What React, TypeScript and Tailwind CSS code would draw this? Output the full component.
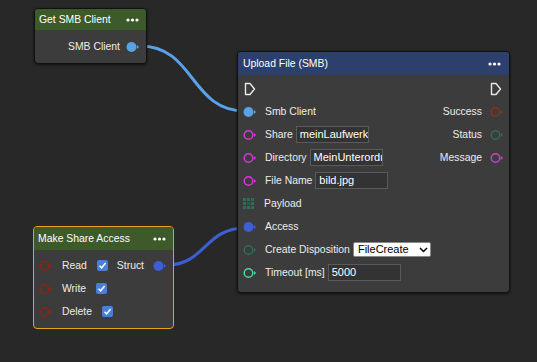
import React from 'react';

type PinKind = 'data' | 'ring' | 'exec' | 'grid';

function Pin({ kind, color }: { kind: PinKind; color: string }) {
  if (kind === 'exec') {
    return (
      <svg width="12" height="14" viewBox="0 0 12 14" className="shrink-0">
        <path d="M1.5 1.5 H6 L10.5 7 L6 12.5 H1.5 Z" fill="none" stroke={color} strokeWidth="1.4" strokeLinejoin="round" />
      </svg>
    );
  }
  if (kind === 'grid') {
    return (
      <svg width="12" height="12" viewBox="0 0 12 12" className="shrink-0">
        {[0, 4, 8].map((y) =>
          [0, 4, 8].map((x) => <rect key={`${x}-${y}`} x={x} y={y} width="3" height="3" fill={color} opacity={x === 4 && y === 4 ? 0.5 : 1} />)
        )}
      </svg>
    );
  }
  const filled = kind === 'data';
  return (
    <svg width="13" height="12" viewBox="0 0 13 12" className="shrink-0">
      <circle cx="5.5" cy="6" r={filled ? 5 : 4.3} fill={filled ? color : 'none'} stroke={color} strokeWidth={filled ? 0 : 1.5} />
      <path d="M11 4 L13 6 L11 8 Z" fill={color} />
    </svg>
  );
}

function Dots() {
  return (
    <svg width="13" height="4" viewBox="0 0 13 4">
      <circle cx="2" cy="2" r="1.6" fill="white" />
      <circle cx="6.5" cy="2" r="1.6" fill="white" />
      <circle cx="11" cy="2" r="1.6" fill="white" />
    </svg>
  );
}

function Field({ value, w }: { value: string; w: string }) {
  return (
    <div className={`${w} h-[17px] bg-[#333333] border border-[#5a5a5a] px-[3px] text-[11px] leading-[15px] text-white overflow-hidden whitespace-nowrap`}>
      {value}
    </div>
  );
}

function Check() {
  return (
    <span className="w-[11px] h-[11px] rounded-[2px] bg-[#4a7fd8] flex items-center justify-center">
      <svg width="9" height="9" viewBox="0 0 9 9">
        <path d="M1.5 4.8 L3.6 6.8 L7.6 2" fill="none" stroke="white" strokeWidth="1.5" />
      </svg>
    </span>
  );
}

export default function App() {
  const font = { fontFamily: '"Liberation Sans", Arial, sans-serif' };
  return (
    <div className="relative w-[537px] h-[362px] bg-[#282828] overflow-hidden text-[#ececec] text-[10.4px] whitespace-nowrap" style={font}>
      {/* wires */}
      <svg className="absolute inset-0" width="537" height="362">
        <path d="M140 46 C 195 46, 190 111, 245 111" fill="none" stroke="#5aa2e8" strokeWidth="3" />
        <path d="M167 265 C 205 265, 205 228, 245 228" fill="none" stroke="#3d5fd6" strokeWidth="3" />
      </svg>

      {/* Get SMB Client */}
      <div className="absolute left-[34px] top-[8px] w-[113px] rounded-[4px] border border-[#111] bg-[#3c3c3c] shadow-[0_1px_3px_rgba(0,0,0,0.6)] overflow-hidden">
        <div className="h-[21px] bg-[#3d5a2b] flex items-center justify-between px-[4px] pr-[7px]">
          <span className="text-white">Get SMB Client</span>
          <Dots />
        </div>
        <div className="h-[33px] flex items-center justify-end gap-[6px] pr-[7px]">
          <span>SMB Client</span>
          <Pin kind="data" color="#5aa2e8" />
        </div>
      </div>

      {/* Upload File (SMB) */}
      <div className="absolute left-[237px] top-[51px] w-[273px] rounded-[4px] border border-[#111] bg-[#3c3c3c] shadow-[0_1px_3px_rgba(0,0,0,0.6)] overflow-hidden">
        <div className="h-[23px] bg-[#2d3f6c] flex items-center justify-between px-[5px] pr-[8px]">
          <span className="text-white">Upload File (SMB)</span>
          <Dots />
        </div>
        <div className="flex pt-[2px] pb-[8px]">
          <div className="flex-1 flex flex-col pl-[5px]">
            <div className="h-[23px] flex items-center pl-[1px]"><Pin kind="exec" color="#e8e8e8" /></div>
            <div className="h-[23px] flex items-center gap-[9px]"><Pin kind="data" color="#5aa2e8" /><span>Smb Client</span></div>
            <div className="h-[23px] flex items-center gap-[9px]"><Pin kind="ring" color="#d63ad6" /><span>Share</span><span className="-ml-[6px]"><Field value="meinLaufwerk" w="w-[73px]" /></span></div>
            <div className="h-[23px] flex items-center gap-[9px]"><Pin kind="ring" color="#d63ad6" /><span>Directory</span><span className="-ml-[6px]"><Field value="MeinUnterordner" w="w-[73px]" /></span></div>
            <div className="h-[23px] flex items-center gap-[9px]"><Pin kind="ring" color="#d63ad6" /><span>File Name</span><span className="-ml-[6px]"><Field value="bild.jpg" w="w-[73px]" /></span></div>
            <div className="h-[23px] flex items-center gap-[9px]"><Pin kind="grid" color="#2e6e58" /><span>Payload</span></div>
            <div className="h-[23px] flex items-center gap-[9px]"><Pin kind="data" color="#3d5fd6" /><span>Access</span></div>
            <div className="h-[23px] flex items-center gap-[9px]"><Pin kind="ring" color="#2e6e58" /><span>Create Disposition</span>
              <span className="-ml-[6px] w-[78px] h-[15px] bg-white border border-[#888] rounded-[2px] text-black text-[11px] leading-[13px] pl-[4px] flex items-center justify-between pr-[2px]">
                FileCreate
                <svg width="9" height="6" viewBox="0 0 9 6"><path d="M1 1 L4.5 4.5 L8 1" fill="none" stroke="black" strokeWidth="1.5" /></svg>
              </span>
            </div>
            <div className="h-[23px] flex items-center gap-[9px]"><Pin kind="ring" color="#4fd69c" /><span>Timeout [ms]</span><span className="-ml-[6px]"><Field value="5000" w="w-[73px]" /></span></div>
          </div>
          <div className="flex flex-col items-end pr-[6px]">
            <div className="h-[23px] flex items-center pr-[1px]"><Pin kind="exec" color="#e8e8e8" /></div>
            <div className="h-[23px] flex items-center gap-[8px]"><span>Success</span><Pin kind="ring" color="#9a2a1e" /></div>
            <div className="h-[23px] flex items-center gap-[8px]"><span>Status</span><Pin kind="ring" color="#2e6e58" /></div>
            <div className="h-[23px] flex items-center gap-[8px]"><span>Message</span><Pin kind="ring" color="#d63ad6" /></div>
          </div>
        </div>
      </div>

      {/* Make Share Access */}
      <div className="absolute left-[33px] top-[226px] w-[141px] rounded-[4px] border border-[#e5a21c] bg-[#3c3c3c] overflow-hidden">
        <div className="h-[23px] bg-[#3d5a2b] flex items-center justify-between px-[4px] pr-[7px]">
          <span className="text-white">Make Share Access</span>
          <Dots />
        </div>
        <div className="flex pt-[4px] pb-[5px]">
          <div className="flex-1 flex flex-col pl-[5px]">
            <div className="h-[23px] flex items-center gap-[10px]"><Pin kind="ring" color="#8a2418" /><span>Read</span><Check /></div>
            <div className="h-[23px] flex items-center gap-[10px]"><Pin kind="ring" color="#8a2418" /><span>Write</span><Check /></div>
            <div className="h-[23px] flex items-center gap-[10px]"><Pin kind="ring" color="#8a2418" /><span>Delete</span><Check /></div>
          </div>
          <div className="flex flex-col pr-[7px]">
            <div className="h-[23px] flex items-center gap-[9px]"><span>Struct</span><Pin kind="data" color="#3d5fd6" /></div>
          </div>
        </div>
      </div>
    </div>
  );
}
